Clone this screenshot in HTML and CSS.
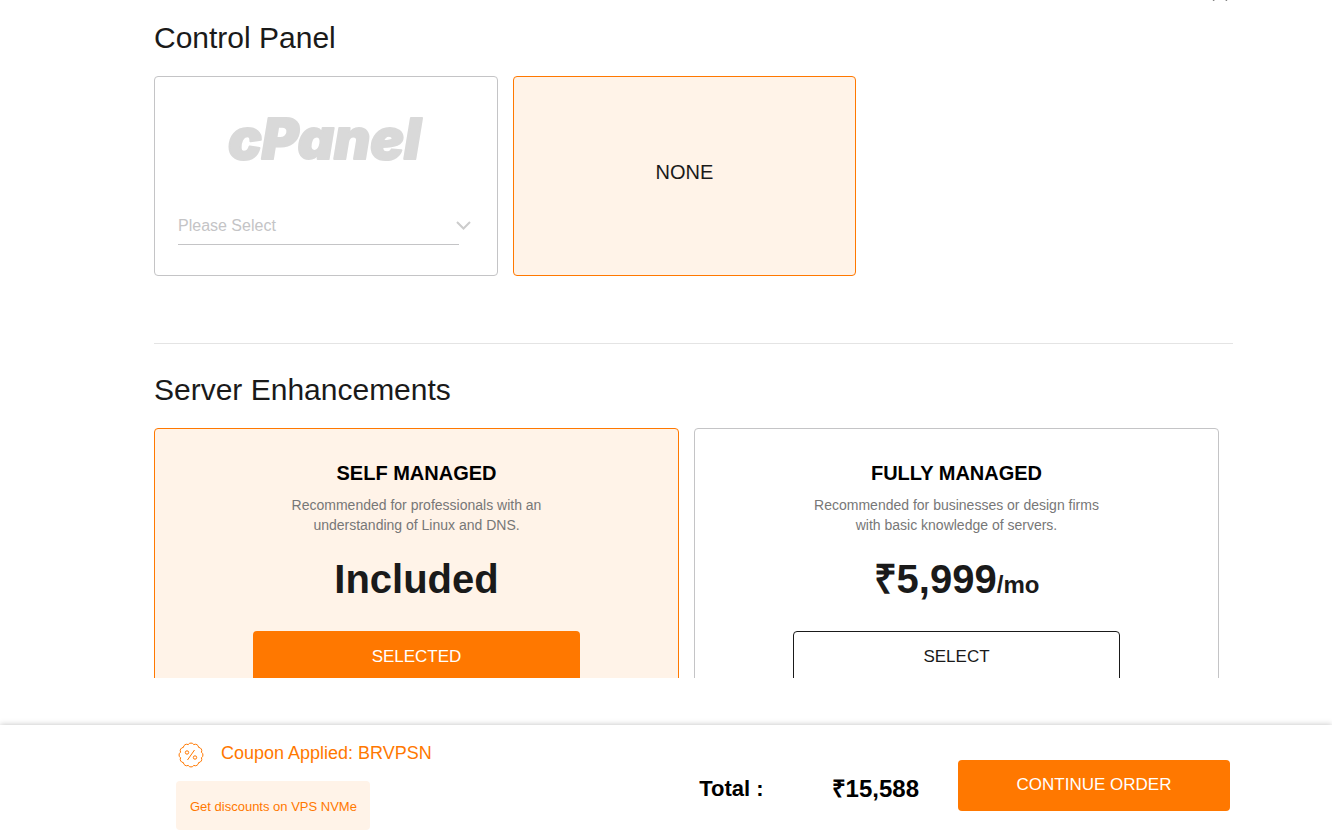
FILE: index.html
```html
<!DOCTYPE html>
<html lang="en">
<head>
<meta charset="utf-8">
<meta name="viewport" content="width=device-width, initial-scale=1">
<title>Configure your server</title>
<link rel="stylesheet" href="styles.css">
</head>
<body>
<main class="options">
  <div class="section-end">
    <svg class="cross" viewBox="0 0 16 16" aria-hidden="true"><path d="M1 0 15 15.500M15 0 1 15.500"/></svg>
  </div>
  <section class="section">
    <h2 class="section-title">Control Panel</h2>
    <div class="panel-grid">
      <div class="card panel-card">
        <svg class="cpanel-logo" viewBox="0 0 220 60" role="img" aria-label="cPanel">
          <text class="cpanel-word" x="2" y="46">cPanel</text>
        </svg>
        <div class="picker">
          <select class="picker-select" aria-label="cPanel license">
            <option>Please Select</option>
          </select>
          <svg class="picker-arrow" viewBox="0 0 14 9" aria-hidden="true"><path d="M.5 1 7 7.500 13.500 1"/></svg>
        </div>
      </div>
      <button type="button" class="card none-card selected">NONE</button>
    </div>
  </section>
  <hr class="divider">
  <section class="section">
    <h2 class="section-title">Server Enhancements</h2>
    <div class="plan-grid">
      <article class="card plan selected">
        <h3 class="plan-name">SELF MANAGED</h3>
        <p class="plan-text">Recommended for professionals with an understanding of Linux and DNS.</p>
        <p class="price">Included</p>
        <button type="button" class="btn btn-primary plan-btn">SELECTED</button>
      </article>
      <article class="card plan">
        <h3 class="plan-name">FULLY MANAGED</h3>
        <p class="plan-text">Recommended for businesses or design firms with basic knowledge of servers.</p>
        <p class="price">₹5,999<span class="per">/mo</span></p>
        <button type="button" class="btn btn-outline plan-btn">SELECT</button>
      </article>
    </div>
  </section>
</main>
<footer class="summary">
  <div class="coupon">
    <div class="coupon-line">
      <svg class="coupon-icon" viewBox="0 0 26 26" aria-hidden="true">
        <path d="M23.400 15.800A3.300 3.300 0 0 1 20.600 20.600A3.300 3.300 0 0 1 15.800 23.400A3.300 3.300 0 0 1 10.200 23.400A3.300 3.300 0 0 1 5.400 20.600A3.300 3.300 0 0 1 2.600 15.800A3.300 3.300 0 0 1 2.600 10.200A3.300 3.300 0 0 1 5.400 5.400A3.300 3.300 0 0 1 10.200 2.600A3.300 3.300 0 0 1 15.800 2.600A3.300 3.300 0 0 1 20.600 5.400A3.300 3.300 0 0 1 23.400 10.200A3.300 3.300 0 0 1 23.400 15.800Z"/>
        <path d="M16.500 8 9.500 18"/>
        <circle cx="9" cy="10.500" r="1.700"/>
        <circle cx="17" cy="15.500" r="1.700"/>
      </svg>
      <span>Coupon Applied: BRVPSN</span>
    </div>
    <p class="discount">Get discounts on VPS NVMe</p>
  </div>
  <div class="checkout">
    <span class="total-label">Total :</span>
    <span class="total-amount">₹15,588</span>
    <button type="button" class="btn btn-primary continue">CONTINUE ORDER</button>
  </div>
</footer>
</body>
</html>
```
FILE: styles.css
```css
* { box-sizing: border-box; }

body {
  margin: 0;
  height: 100vh;
  display: flex;
  flex-direction: column;
  overflow: hidden;
  background: #fff;
  color: #1a1a1a;
  font-family: "Liberation Sans", Arial, sans-serif;
}

h2, h3, p { margin: 0; }
button, select { font-family: inherit; }

.options {
  flex: 1;
  min-height: 0;
  overflow: hidden;
  margin-bottom: 47px;
  padding: 0 99px 0 154px;
}

.section-end {
  height: 1px;
  overflow: hidden;
  display: flex;
  justify-content: flex-end;
  align-items: flex-end;
  padding-right: 5px;
}
.cross {
  flex: none;
  width: 16px;
  height: 16px;
  fill: none;
  stroke: #777;
  stroke-width: 2;
}

.section { padding-top: 19px; }
.section-title {
  margin-bottom: 20px;
  font-size: 30px;
  line-height: 36px;
  font-weight: 400;
}

.panel-grid {
  display: grid;
  grid-template-columns: repeat(3, 1fr);
  gap: 15px;
  padding-right: 18px;
}
.plan-grid {
  display: grid;
  grid-template-columns: repeat(2, 1fr);
  gap: 15px;
  padding-right: 14px;
}

.card {
  border: 1px solid #c4c4c6;
  border-radius: 4px;
  background: #fff;
}
.card.selected {
  border-color: #ff7800;
  background: #fff3e8;
}

.panel-card {
  min-height: 200px;
  padding: 36px 38px 0 23px;
  display: flex;
  flex-direction: column;
}
.cpanel-logo {
  flex: none;
  width: 220px;
  height: 60px;
  margin-left: 48px;
}
.cpanel-word {
  font: italic 900 56px Inter, sans-serif;
  fill: #d9d9d9;
  stroke: #d9d9d9;
  stroke-width: 2;
  stroke-linejoin: round;
}

.picker {
  position: relative;
  margin-top: 34px;
}
.picker-select {
  display: block;
  width: 100%;
  height: 38px;
  padding: 0;
  border: 0;
  border-bottom: 1px solid #c4c4c6;
  border-radius: 0;
  appearance: none;
  background: transparent;
  color: #c4c4c6;
  font-size: 16px;
}
.picker-arrow {
  position: absolute;
  right: -12px;
  top: 14px;
  width: 15px;
  height: 9px;
  fill: none;
  stroke: #ccc;
  stroke-width: 2;
  pointer-events: none;
}

.none-card {
  padding: 0 0 8px;
  color: #1a1a1a;
  font-size: 20px;
}

.divider {
  height: 1px;
  margin: 67px 0 9px;
  border: 0;
  background: #e4e4e4;
}

.plan {
  display: flex;
  flex-direction: column;
  align-items: center;
  padding: 32px 98px;
  text-align: center;
}
.plan-name {
  color: #000;
  font-size: 20px;
  line-height: 24px;
  font-weight: 700;
}
.plan-text {
  max-width: 296px;
  margin-top: 10px;
  color: #777;
  font-size: 14px;
  line-height: 20px;
}
.price {
  margin-top: 20px;
  font-size: 40px;
  line-height: 48px;
  font-weight: 700;
}
.per {
  font-size: 24px;
  line-height: 24px;
}

.btn {
  border: 0;
  border-radius: 4px;
  font-size: 17px;
}
.btn-primary {
  background: #ff7800;
  color: #fff;
}
.btn-outline {
  border: 1px solid #1a1a1a;
  background: #fff;
  color: #1a1a1a;
}
.plan-btn {
  width: 100%;
  height: 51px;
  margin-top: 28px;
}

.summary {
  flex: none;
  display: flex;
  justify-content: space-between;
  align-items: flex-start;
  padding: 16px 102px 1px 176px;
  background: #fff;
  box-shadow: 0 0 6px rgba(0, 0, 0, 0.25);
}
.coupon { color: #ff7800; }
.coupon-line {
  display: flex;
  align-items: center;
  gap: 17px;
  padding-left: 2px;
  height: 26px;
  font-size: 18px;
}
.coupon-line span { padding-bottom: 2px; }
.coupon-icon {
  width: 26px;
  height: 26px;
  margin-top: 2px;
  fill: none;
  stroke: #ff7800;
  stroke-width: 1;
}
.discount {
  width: max-content;
  margin-top: 14px;
  padding: 16px 13px 14px 14px;
  border-radius: 4px;
  background: #fff3e8;
  font-size: 13px;
  line-height: 19px;
}
.checkout {
  display: flex;
  align-items: center;
  padding-top: 19px;
  color: #000;
  font-weight: 700;
}
.total-label {
  margin-right: 68px;
  padding-top: 6px;
  font-size: 22px;
  line-height: 28px;
}
.total-amount {
  margin-right: 39px;
  padding-top: 6px;
  font-size: 24px;
  line-height: 28px;
}
.continue {
  width: 272px;
  height: 51px;
  padding-bottom: 3px;
}
```
